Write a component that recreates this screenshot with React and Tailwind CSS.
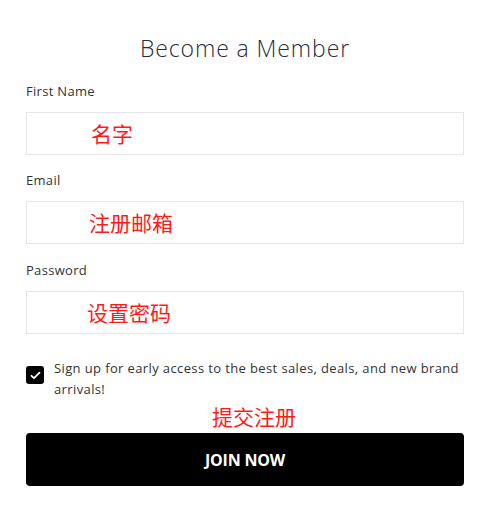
import React from 'react';

const fields = [
  { label: 'First Name', hint: '名字', pad: 'pl-[64px]', top: 'mt-[20px]' },
  { label: 'Email', hint: '注册邮箱', pad: 'pl-[62px]', top: 'mt-[16px]' },
  { label: 'Password', hint: '设置密码', pad: 'pl-[60px]', top: 'mt-[17px]' },
];

const cjk = "font-['Microsoft_YaHei','Noto_Sans_CJK_SC',sans-serif]";

const Field = ({ label, hint, pad, top }) => (
  <div className={top}>
    <label className="block text-[13px] leading-[18px] tracking-[0.3px] text-[#333]">{label}</label>
    <div className={`mt-[12px] h-[43px] border border-[#e6e6e6] flex items-center ${pad}`}>
      <span className={`${cjk} text-[21px] leading-none text-[#ff1a1a]`}>{hint}</span>
    </div>
  </div>
);

export default function App() {
  return (
    <div className="w-[487px] h-[510px] bg-white pl-[26px] pr-[23px] pt-[34px] font-['Open_Sans',sans-serif]">
      <h1 className="text-center text-[23px] leading-[28px] font-light tracking-[0.9px] text-[#2b2b3a]">
        Become a Member
      </h1>

      {fields.map((f) => (
        <Field key={f.label} {...f} />
      ))}

      <div className="mt-[24px] flex items-start gap-[10px]">
        <span className="mt-[8px] shrink-0 w-[18px] h-[18px] rounded-[3px] bg-black flex items-center justify-center">
          <svg width="11" height="9" viewBox="0 0 11 9" fill="none">
            <polyline points="1.5,4.8 4,7.2 9.5,1.6" stroke="white" strokeWidth="1.8" strokeLinecap="round" strokeLinejoin="round" />
          </svg>
        </span>
        <p className="text-[13px] leading-[21px] tracking-[0.38px] text-[#333]">
          Sign up for early access to the best sales, deals, and new brand arrivals!
        </p>
      </div>

      <p className={`${cjk} mt-[4px] pl-[18px] text-center text-[21px] leading-[24px] text-[#ff1a1a]`}>提交注册</p>

      <button className="mt-[5px] w-full h-[53px] rounded-[4px] bg-black text-white text-[16px] font-bold tracking-[-0.2px]">
        JOIN NOW
      </button>
    </div>
  );
}
